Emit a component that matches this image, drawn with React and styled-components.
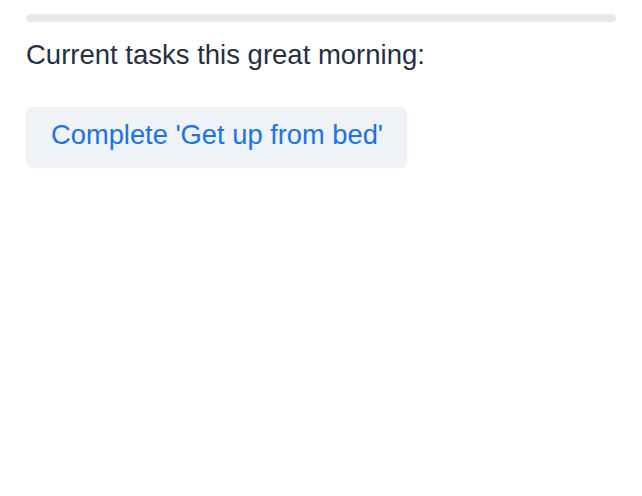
import React from 'react';
import styled, { createGlobalStyle } from 'styled-components';

const GlobalStyle = createGlobalStyle`
  body {
    margin: 0;
    background: #ffffff;
    font-family: "Liberation Sans", Arial, sans-serif;
  }
`;

const Page = styled.div`
  padding: 14px 26px 0 26px;
  display: flex;
  flex-direction: column;
  align-items: flex-start;
`;

const ProgressTrack = styled.div`
  align-self: stretch;
  height: 8px;
  border-radius: 4px;
  background: #e5e9ee;
  overflow: hidden;
`;

const ProgressFill = styled.div`
  height: 100%;
  background: #1a73e8;
`;

const Heading = styled.p`
  margin: 17px 0 0 0;
  font-size: 27.5px;
  line-height: 31px;
  color: #253043;
`;

const TaskButton = styled.button`
  box-sizing: border-box;
  margin-top: 37px;
  height: 61px;
  padding: 0 24px 5px 25px;
  border: none;
  border-radius: 6px;
  background: #eff3f7;
  color: #1a73e8;
  font-family: "Liberation Sans", Arial, sans-serif;
  font-size: 27.3px;
  cursor: pointer;
`;

export default function App() {
  const progress = 0;
  return (
    <>
      <GlobalStyle />
      <Page>
        <ProgressTrack>
          <ProgressFill style={{ width: `${progress}%` }} />
        </ProgressTrack>
        <Heading>Current tasks this great morning:</Heading>
        <TaskButton>Complete 'Get up from bed'</TaskButton>
      </Page>
    </>
  );
}
